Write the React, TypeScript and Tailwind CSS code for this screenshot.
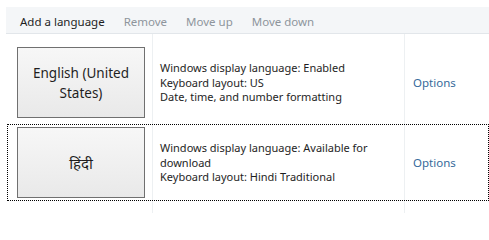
const font = { fontFamily: '"Noto Sans", "Open Sans", sans-serif' };

function LangButton({ children }: { children: React.ReactNode }) {
  return (
    <div className="flex h-[71px] w-[128px] shrink-0 items-center justify-center border border-[#707070] bg-gradient-to-b from-[#f7f7f7] to-[#e9e9e9] text-center text-[13.5px] leading-[20px] text-[#1e1e1e]">
      {children}
    </div>
  );
}

function Row({
  focused,
  label,
  lines,
}: {
  focused?: boolean;
  label: React.ReactNode;
  lines: React.ReactNode;
}) {
  return (
    <div
      className={
        focused
          ? 'ml-[7px] flex items-center border border-dotted border-black py-[2px] pl-[9px]'
          : 'ml-[7px] flex items-center border border-transparent py-[2px] pl-[9px]'
      }
    >
      <LangButton>{label}</LangButton>
      <div className="ml-[15px] w-[253px] pt-[1px] text-[11px] leading-[14.5px] text-[#1e1e1e]">{lines}</div>
      <div className="text-[11.5px] text-[#356a9a]">Options</div>
    </div>
  );
}

export default function App() {
  return (
    <div className="h-[213px] w-[489px] overflow-hidden bg-white" style={font}>
      {/* toolbar */}
      <div className="ml-[6px] mt-[7px] flex h-[27px] items-center gap-[19px] border-b border-[#e2e6ea] bg-[#f4f6f8] pl-[14px] pt-[3px] text-[11.5px]">
        <span className="text-[#1e1e1e]">Add a language</span>
        <span className="text-[#8e959c]">Remove</span>
        <span className="text-[#8e959c]">Move up</span>
        <span className="text-[#8e959c]">Move down</span>
      </div>

      {/* list with faint column lines */}
      <div className="h-[179px] bg-[linear-gradient(to_right,transparent_152px,#edf0f2_152px,#edf0f2_153px,transparent_153px,transparent_404px,#edf0f2_404px,#edf0f2_405px,transparent_405px)] pt-[10px]">
        <Row
          label={
            <>
              English (United
              <br />
              States)
            </>
          }
          lines={
            <>
              Windows display language: Enabled
              <br />
              Keyboard layout: US
              <br />
              Date, time, and number formatting
            </>
          }
        />
        <div className="mt-[3px]">
          <Row
            focused
            label={<span className="text-[15px]">हिंदी</span>}
            lines={
              <>
                Windows display language: Available for
                <br />
                download
                <br />
                Keyboard layout: Hindi Traditional
              </>
            }
          />
        </div>
      </div>
    </div>
  );
}
